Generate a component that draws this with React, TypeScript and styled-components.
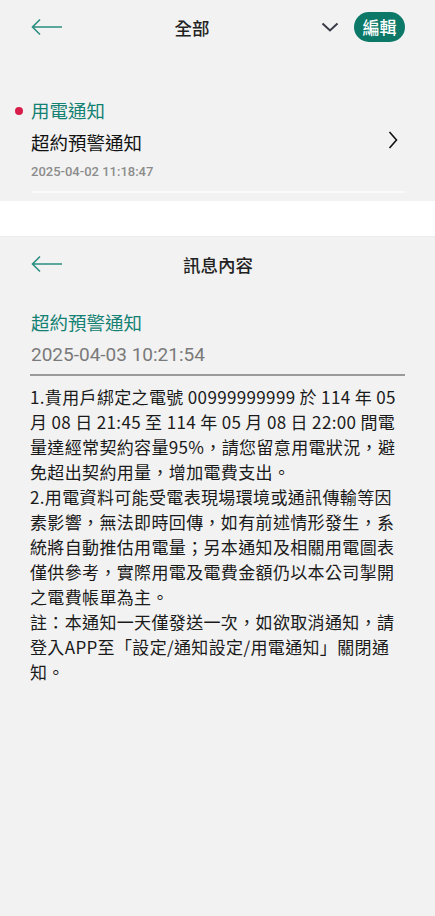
import React from "react";
import styled, { createGlobalStyle } from "styled-components";

const GlobalStyle = createGlobalStyle`
  * { box-sizing: border-box; }
  html, body { margin: 0; padding: 0; background: #ffffff; }
  body {
    font-family: "Roboto", "Noto Sans CJK TC", sans-serif;
    -webkit-font-smoothing: antialiased;
  }
`;

const TEAL = "#138173";
const CJK = `"Noto Sans CJK TC", "Noto Sans", sans-serif`;

// message body, split the way the app wraps it on this width
const MESSAGE: string[][] = [
  [
    "1.貴用戶綁定之電號 00999999999 於 114 年 05",
    "月 08 日 21:45 至 114 年 05 月 08 日 22:00 間電",
    "量達經常契約容量95%，請您留意用電狀況，避",
    "免超出契約用量，增加電費支出。",
  ],
  [
    "2.用電資料可能受電表現場環境或通訊傳輸等因",
    "素影響，無法即時回傳，如有前述情形發生，系",
    "統將自動推估用電量；另本通知及相關用電圖表",
    "僅供參考，實際用電及電費金額仍以本公司掣開",
    "之電費帳單為主。",
  ],
  [
    "註：本通知一天僅發送一次，如欲取消通知，請",
    "登入APP至「設定/通知設定/用電通知」關閉通",
    "知。",
  ],
];

const Page = styled.div`
  width: 435px;
  min-height: 916px;
  display: flex;
  flex-direction: column;
  background: #ffffff;
`;

const Panel = styled.section<{ grow?: boolean }>`
  background: #f2f2f2;
  flex: ${(p) => (p.grow ? 1 : "none")};
  display: flex;
  flex-direction: column;
`;

const Gap = styled.div`
  height: 37px;
  background: #ffffff;
  border-top: 1px solid #f2f2f2;
  border-bottom: 1px solid #ececec;
`;

const Header = styled.header`
  height: 54px;
  display: flex;
  align-items: center;
  padding: 0 30px 0 31px;
`;

const BackButton = styled.button`
  width: 32px;
  height: 20px;
  padding: 0;
  border: 0;
  background: none;
  display: flex;
  align-items: center;
  flex: none;
`;

const Title = styled.h1<{ centered?: boolean }>`
  flex: 1;
  margin: 0;
  text-align: center;
  font-family: ${CJK};
  font-size: 17.5px;
  font-weight: 500;
  color: #222;
  padding-right: ${(p) => (p.centered ? "32px" : "0")};
`;

const Controls = styled.div`
  display: flex;
  align-items: center;
  gap: 15px;
`;

const EditPill = styled.button`
  height: 30px;
  width: 51px;
  border: 0;
  border-radius: 15px;
  background: #0b7868;
  color: #fff;
  font-family: ${CJK};
  font-size: 17px;
  font-weight: 500;
  padding: 0;
  line-height: 30px;
`;

const List = styled.div`
  padding: 43px 30px 0 31px;
`;

const Item = styled.div`
  position: relative;
  display: flex;
  align-items: center;
  border-bottom: 2px solid #fafafa;
  padding: 0 7px 8px 0;
  margin-bottom: 7px;
`;

const Dot = styled.span`
  position: absolute;
  left: -16px;
  top: 10px;
  width: 8px;
  height: 8px;
  border-radius: 50%;
  background: #d81d4a;
`;

const ItemText = styled.div`
  flex: 1;
  display: flex;
  flex-direction: column;
`;

const Category = styled.div`
  font-family: ${CJK};
  font-size: 18.5px;
  line-height: 26px;
  color: ${TEAL};
`;

const ItemTitle = styled.div`
  font-family: ${CJK};
  font-size: 18.5px;
  line-height: 38px;
  color: #111;
`;

const ItemDate = styled.div`
  font-size: 13px;
  font-weight: 500;
  line-height: 22px;
  color: #8c8c8c;
`;

const Detail = styled.article`
  padding: 15px 30px 0 31px;
`;

const DetailTitle = styled.h2`
  margin: 0;
  font-family: ${CJK};
  font-size: 18.5px;
  font-weight: 400;
  line-height: 32px;
  color: ${TEAL};
`;

const DetailDate = styled.div`
  font-size: 19px;
  line-height: 34px;
  color: #7a7a7a;
  padding-bottom: 2px;
  border-bottom: 2px solid #9a9a9a;
  margin-left: -1px;
  padding-left: 1px;
`;

const Body = styled.div`
  padding-top: 8px;
  margin-left: -1px;
  font-family: ${CJK};
  font-size: 17px;
  line-height: 25px;
  letter-spacing: 0.35px;
  color: #1a1a1a;
`;

const Paragraph = styled.p`
  margin: 0;
`;

const Line = styled.span`
  display: block;
  white-space: nowrap;
`;

const ArrowLeft = () => (
  <svg width="32" height="18" viewBox="0 0 32 18" fill="none">
    <path d="M31 9H2M9 1.5L1.5 9L9 16.5" stroke="#2a8f80" strokeWidth="1.6" />
  </svg>
);

const ChevronDown = () => (
  <svg width="18" height="10" viewBox="0 0 18 10" fill="none">
    <path d="M1.5 1.5L9 8.5L16.5 1.5" stroke="#3a3a48" strokeWidth="2" />
  </svg>
);

const ChevronRight = () => (
  <svg width="10" height="18" viewBox="0 0 10 18" fill="none">
    <path d="M1.5 1L8.5 9L1.5 17" stroke="#111" strokeWidth="1.6" />
  </svg>
);

export default function App() {
  return (
    <>
      <GlobalStyle />
      <Page>
        <Panel>
          <Header>
            <BackButton aria-label="返回">
              <ArrowLeft />
            </BackButton>
            <Title>全部</Title>
            <Controls>
              <ChevronDown />
              <EditPill>編輯</EditPill>
            </Controls>
          </Header>
          <List>
            <Item>
              <Dot />
              <ItemText>
                <Category>用電通知</Category>
                <ItemTitle>超約預警通知</ItemTitle>
                <ItemDate>2025-04-02 11:18:47</ItemDate>
              </ItemText>
              <ChevronRight />
            </Item>
          </List>
        </Panel>
        <Gap />
        <Panel grow>
          <Header>
            <BackButton aria-label="返回">
              <ArrowLeft />
            </BackButton>
            <Title centered>訊息內容</Title>
          </Header>
          <Detail>
            <DetailTitle>超約預警通知</DetailTitle>
            <DetailDate>2025-04-03 10:21:54</DetailDate>
            <Body>
              {MESSAGE.map((para, i) => (
                <Paragraph key={i}>
                  {para.map((line, j) => (
                    <Line key={j}>{line}</Line>
                  ))}
                </Paragraph>
              ))}
            </Body>
          </Detail>
        </Panel>
      </Page>
    </>
  );
}
